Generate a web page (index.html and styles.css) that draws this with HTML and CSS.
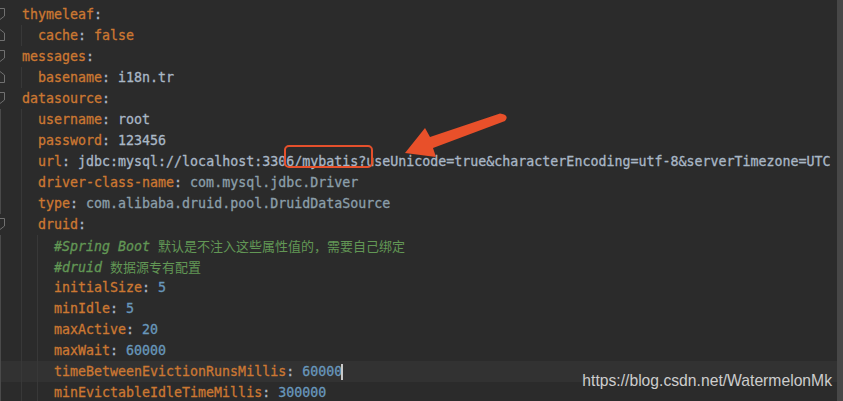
FILE: index.html
```html
<!DOCTYPE html>
<html lang="zh-CN">
<head>
    <meta charset="UTF-8">
    <meta name="viewport" content="width=device-width, initial-scale=1.0">
    <title>application.yml</title>
    <link rel="stylesheet" href="styles.css">
</head>
<body>
    <div class="window">
        <div class="editor">
            <div class="line"><span class="gutter"><svg class="fold" viewBox="0 0 10 12"><path d="M0.5 0.5H9.5V8L5 11.5L0.5 8Z"/></svg></span><span class="code"><span class="key">thymeleaf</span>:</span></div>
            <div class="line"><span class="gutter"><svg class="fold" viewBox="0 0 10 12"><path d="M0.5 11.5H9.5V4L5 0.5L0.5 4Z"/></svg></span><span class="guide"></span><span class="code"><span class="key">cache</span>: <span class="key">false</span></span></div>
            <div class="line"><span class="gutter"><svg class="fold" viewBox="0 0 10 12"><path d="M0.5 0.5H9.5V8L5 11.5L0.5 8Z"/></svg></span><span class="code"><span class="key">messages</span>:</span></div>
            <div class="line"><span class="gutter"><svg class="fold" viewBox="0 0 10 12"><path d="M0.5 11.5H9.5V4L5 0.5L0.5 4Z"/></svg></span><span class="guide"></span><span class="code"><span class="key">basename</span>: i18n.tr</span></div>
            <div class="line"><span class="gutter"><svg class="fold" viewBox="0 0 10 12"><path d="M0.5 0.5H9.5V8L5 11.5L0.5 8Z"/></svg></span><span class="code"><span class="key">datasource</span>:</span></div>
            <div class="line"><span class="gutter infold"></span><span class="guide"></span><span class="code"><span class="key">username</span>: root</span></div>
            <div class="line"><span class="gutter infold"></span><span class="guide"></span><span class="code"><span class="key">password</span>: 123456</span></div>
            <div class="line"><span class="gutter infold"></span><span class="guide"></span><span class="code"><span class="key">url</span>: jdbc:mysql://localhost:3306/mybatis?useUnicode=true&amp;characterEncoding=utf-8&amp;serverTimezone=UTC</span></div>
            <div class="line"><span class="gutter infold"></span><span class="guide"></span><span class="code"><span class="key">driver-class-name</span>: <span class="ref">com.mysql.jdbc.Driver</span></span></div>
            <div class="line"><span class="gutter infold"></span><span class="guide"></span><span class="code"><span class="key">type</span>: <span class="ref">com.alibaba.druid.pool.DruidDataSource</span></span></div>
            <div class="line"><span class="gutter"><svg class="fold" viewBox="0 0 10 12"><path d="M0.5 0.5H9.5V8L5 11.5L0.5 8Z"/></svg></span><span class="guide"></span><span class="code"><span class="key">druid</span>:</span></div>
            <div class="line"><span class="gutter infold"></span><span class="guide"></span><span class="guide"></span><span class="code comment"><i>#Spring Boot </i><span class="cjk">默认是不注入这些属性值的，需要自己绑定</span></span></div>
            <div class="line"><span class="gutter infold"></span><span class="guide"></span><span class="guide"></span><span class="code comment"><i>#druid </i><span class="cjk">数据源专有配置</span></span></div>
            <div class="line"><span class="gutter infold"></span><span class="guide"></span><span class="guide"></span><span class="code"><span class="key">initialSize</span>: <span class="num">5</span></span></div>
            <div class="line"><span class="gutter infold"></span><span class="guide"></span><span class="guide"></span><span class="code"><span class="key">minIdle</span>: <span class="num">5</span></span></div>
            <div class="line"><span class="gutter infold"></span><span class="guide"></span><span class="guide"></span><span class="code"><span class="key">maxActive</span>: <span class="num">20</span></span></div>
            <div class="line"><span class="gutter infold"></span><span class="guide"></span><span class="guide"></span><span class="code"><span class="key">maxWait</span>: <span class="num">60000</span></span></div>
            <div class="line current"><span class="gutter infold"></span><span class="guide"></span><span class="guide"></span><span class="code"><span class="key">timeBetweenEvictionRunsMillis</span>: <span class="num">60000</span><span class="caret"></span></span></div>
            <div class="line"><span class="gutter infold"></span><span class="guide"></span><span class="guide"></span><span class="code"><span class="key">minEvictableIdleTimeMillis</span>: <span class="num">300000</span></span></div>

            <!-- annotations drawn over the screenshot -->
            <div class="mark-box"></div>
            <svg class="mark-arrow" viewBox="400 108 112 54">
                <path d="M500 113.5L430 137L425 128L405 153L436 157L433 148L505 121Q510 115 500 113.5Z"/>
            </svg>
            <div class="watermark">https://blog.csdn.net/WatermelonMk</div>
        </div>
        <div class="scrollbar"></div>
    </div>
</body>
</html>
```

FILE: styles.css
```css
body {
    margin: 0;
    background-color: #2b2b2b;
    overflow: hidden;
}
.window {
    display: flex;
    height: 401px;
}
.editor {
    position: relative;
    flex: 1;
    padding-top: 3.5px;
    font-family: "DejaVu Sans Mono", "Noto Sans CJK SC", monospace;
    font-size: 13.3px;
    color: #a9b7c6;
}
.line {
    display: flex;
    height: 21px;
    line-height: 21px;
    white-space: pre;
    -webkit-text-stroke: 0.3px currentColor;
}
.line.current {
    background-color: #323232;
}
.gutter {
    flex: none;
    width: 21px;
    display: flex;
    align-items: center;
    box-sizing: border-box;
}
.gutter.infold {
    border-left: 1px solid #4a4a4a;
}
.fold {
    width: 10px;
    height: 12px;
    margin-left: -5px;
    fill: #2b2b2b;
    stroke: #707070;
    stroke-width: 1;
}
.guide {
    flex: none;
    width: 16px;
    border-left: 1px solid #383838;
    box-sizing: border-box;
}
.code {
    margin-left: 1px;
}
.key {
    color: #cc7832;
}
.num {
    color: #6897bb;
}
.ref {
    color: #8b9faa;
}
.comment {
    color: #629755;
}
.cjk {
    font-family: "Noto Sans CJK SC", sans-serif;
    font-size: 13px;
    -webkit-text-stroke: 0;
}
.caret {
    display: inline-block;
    width: 2px;
    height: 16px;
    margin-left: -1px;
    vertical-align: middle;
    background-color: #c8c8c8;
}
.mark-box {
    position: absolute;
    left: 284px;
    top: 145px;
    width: 89px;
    height: 23px;
    border: 2px solid #e5502c;
    border-radius: 5px;
    box-sizing: border-box;
}
.mark-arrow {
    position: absolute;
    left: 400px;
    top: 108px;
    width: 112px;
    height: 54px;
    fill: #e8502a;
}
.watermark {
    position: absolute;
    right: 5px;
    top: 372px;
    font-family: "Liberation Sans", Arial, sans-serif;
    font-size: 15.7px;
    line-height: 18px;
    color: #cdcdcd;
}
.scrollbar {
    flex: none;
    width: 6px;
    background-color: #474747;
}
```
